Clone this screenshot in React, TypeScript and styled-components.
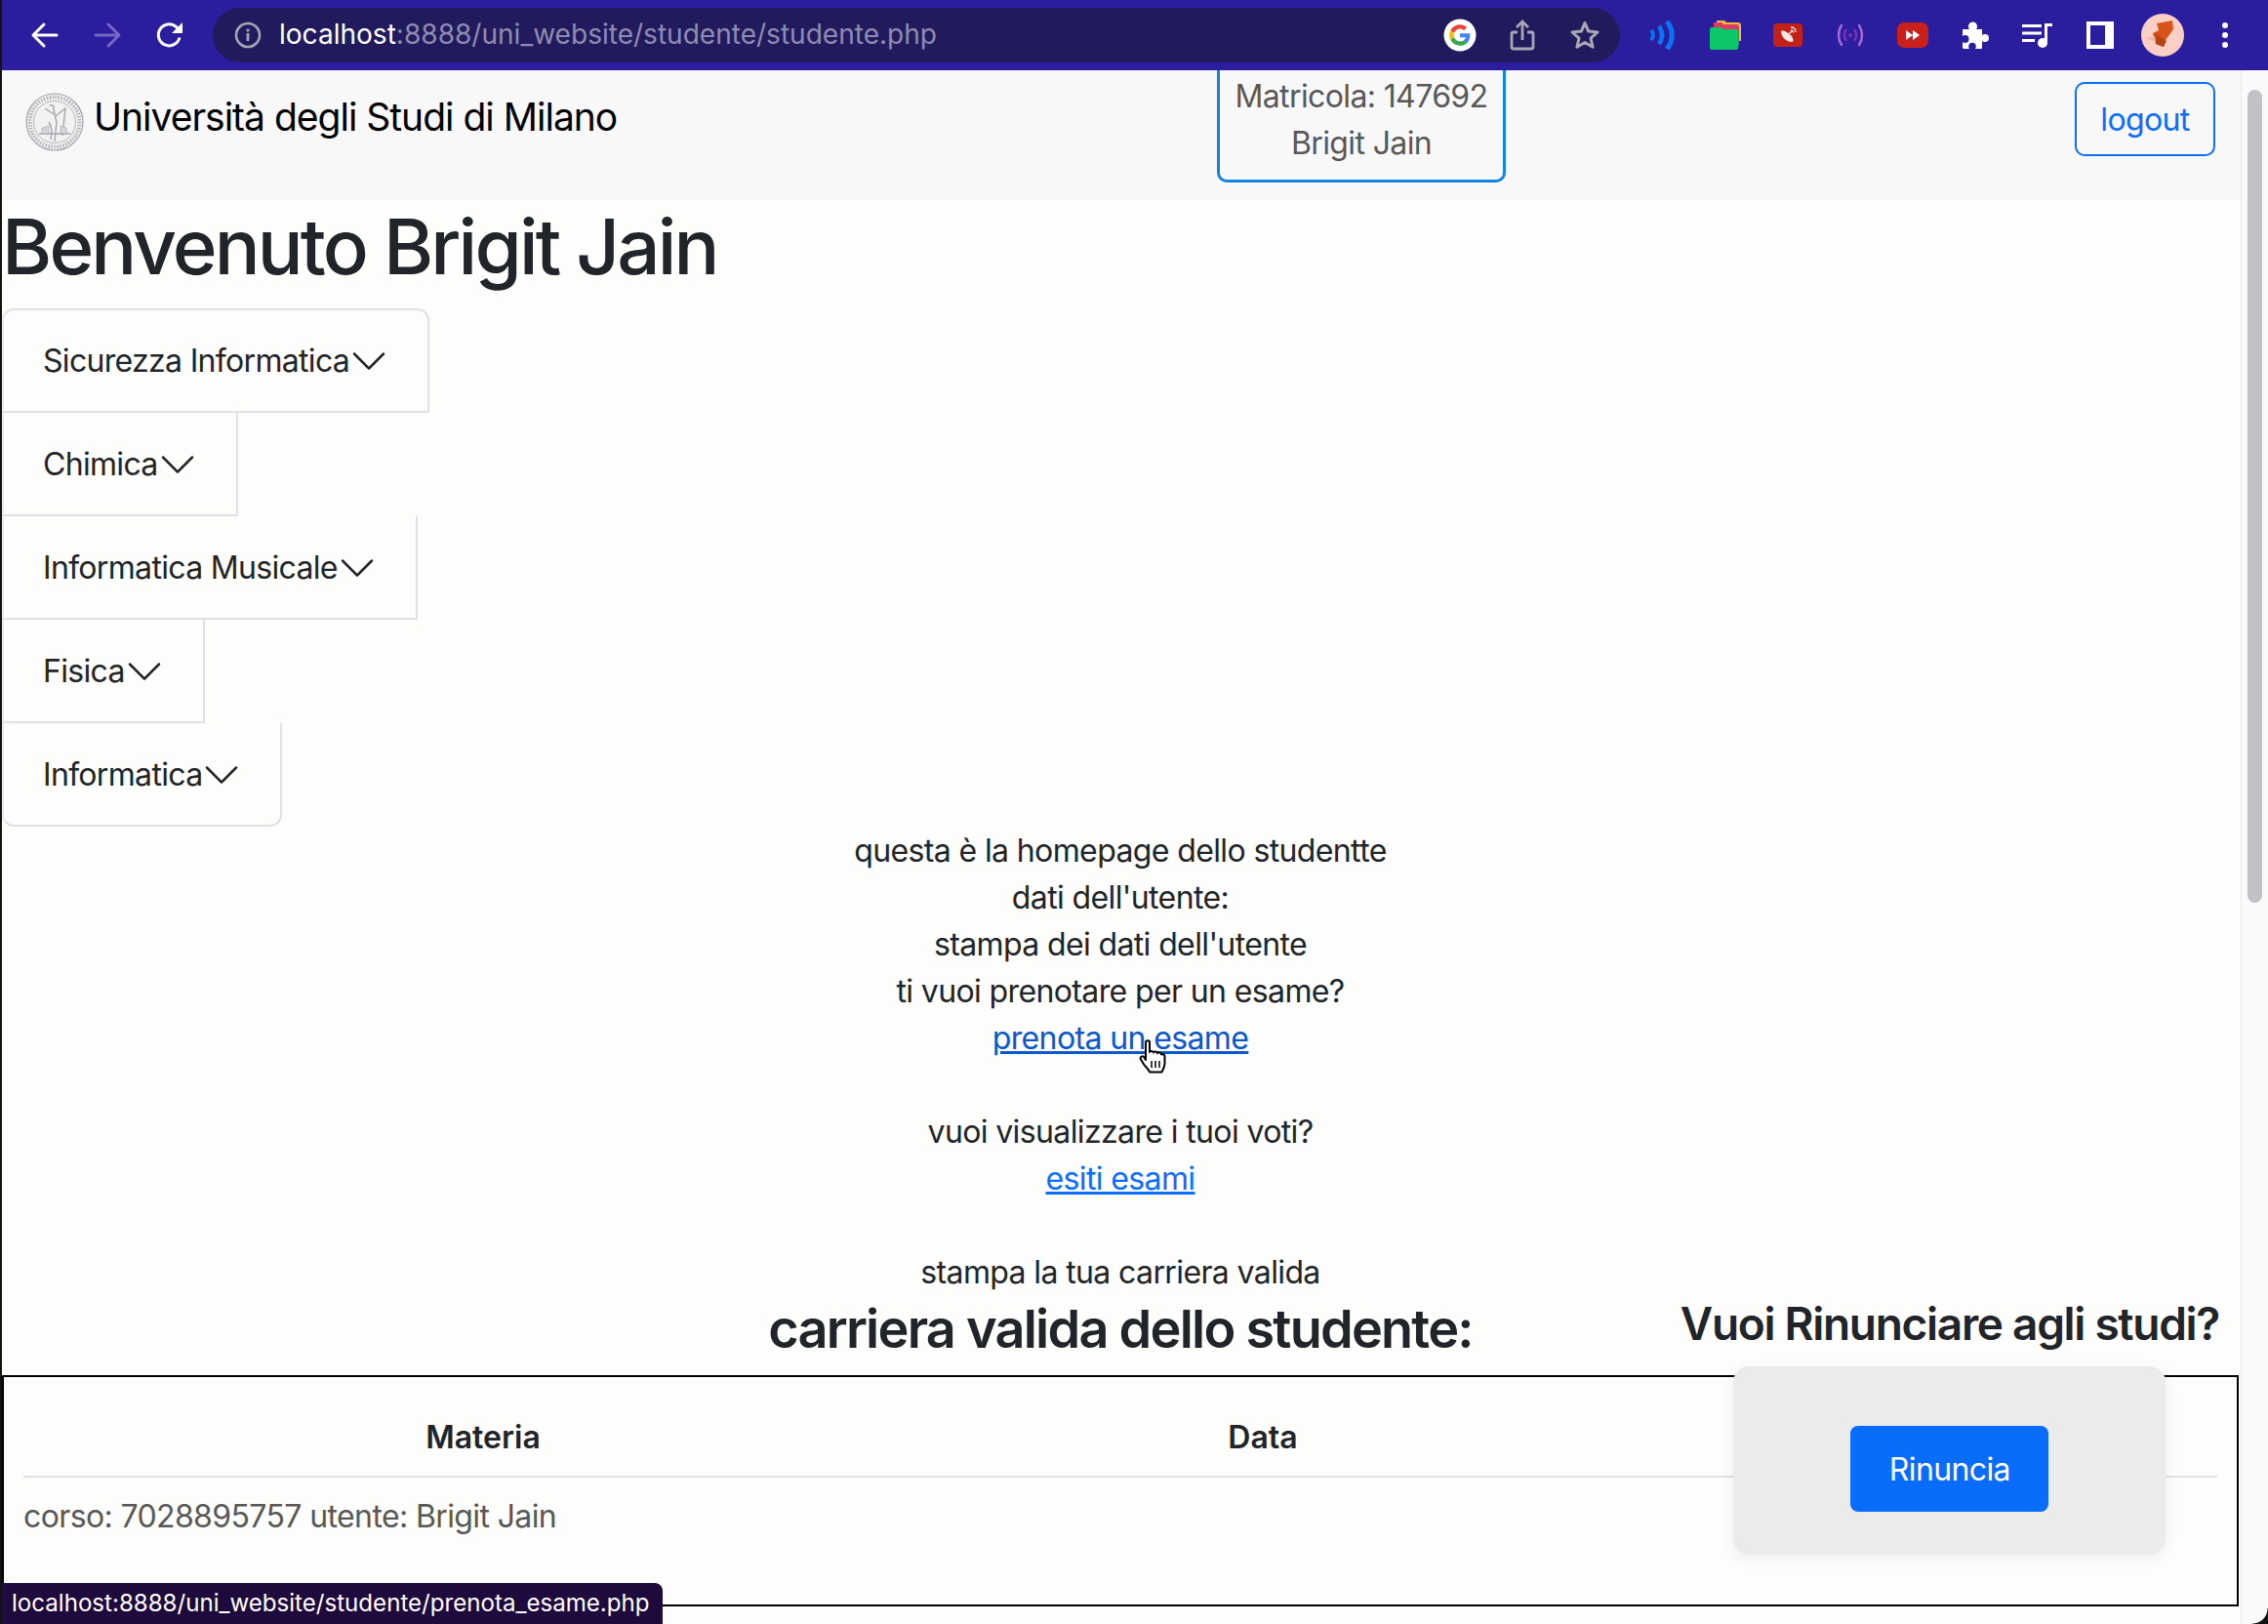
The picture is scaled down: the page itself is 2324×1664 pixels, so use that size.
import React from "react";
import styled, { createGlobalStyle } from "styled-components";

const GlobalStyle = createGlobalStyle`
  html, body {
    margin: 0;
    padding: 0;
    background: #fdfdfc;
  }
  * {
    box-sizing: border-box;
  }
`;

const Window = styled.div`
  position: relative;
  width: 2324px;
  height: 1664px;
  overflow: hidden;
  display: flex;
  flex-direction: column;
  border-left: 2px solid #14110f;
  background: #fdfdfc;
  color: #212529;
  font-family: Inter, "Liberation Sans", sans-serif;
  font-size: 32px;
  line-height: 48px;
  letter-spacing: -0.62px;
`;

const Toolbar = styled.header`
  flex: none;
  height: 72px;
  display: flex;
  align-items: center;
  padding-left: 12px;
  background: #2b1e9e;
`;

const ToolButton = styled.div`
  flex: none;
  width: 64px;
  height: 60px;
  display: flex;
  align-items: center;
  justify-content: center;
`;

const UrlPill = styled.div`
  flex: none;
  width: 1442px;
  height: 56px;
  margin: 0 12px 0 12px;
  padding: 0 4px 0 20px;
  display: flex;
  align-items: center;
  border-radius: 28px;
  background: #211b5e;
`;

const InfoSlot = styled.div`
  flex: none;
  width: 32px;
  margin-right: 16px;
  display: flex;
  align-items: center;
  justify-content: center;
`;

const Url = styled.div`
  flex: 1;
  padding-bottom: 2px;
  font-size: 28.05px;
  line-height: 36px;
  letter-spacing: 0;
  color: #8f8bb0;
  white-space: nowrap;
`;

const UrlHost = styled.span`
  color: #ffffff;
`;

const Body = styled.div`
  flex: 1;
  min-height: 0;
  display: flex;
`;

const Main = styled.main`
  position: relative;
  flex: 1;
  min-width: 0;
`;

const ScrollTrack = styled.div`
  flex: none;
  width: 28px;
  padding: 20px 6px 0 6px;
  background: #fafafa;
  border-left: 1px solid #e8e8e8;
`;

const ScrollThumb = styled.div`
  height: 833px;
  border-radius: 8px;
  background: #c2c2c6;
`;

const Navbar = styled.nav`
  height: 132px;
  display: grid;
  grid-template-columns: 1245px 296px 1fr;
  align-items: start;
  padding-right: 26px;
  background: #f8f8f8;
`;

const Brand = styled.a`
  display: flex;
  align-items: center;
  gap: 10px;
  height: 60px;
  margin: 23px 0 0 24px;
  font-size: 39px;
  letter-spacing: -1px;
  color: #000000;
`;

const BrandText = styled.span`
  position: relative;
  top: -5px;
`;

const StudentCard = styled.div`
  height: 115px;
  padding-top: 3px;
  text-align: center;
  color: #585858;
  border: 3px solid #1784dc;
  border-top: none;
  border-radius: 0 0 10px 10px;
`;

const LogoutButton = styled.button`
  justify-self: end;
  width: 144px;
  height: 76px;
  margin-top: 12px;
  padding: 2px 0 0;
  border: 2.5px solid #0d6efd;
  border-radius: 10px;
  background: transparent;
  color: #0d6efd;
  font: inherit;
  letter-spacing: inherit;
`;

const Title = styled.h1`
  margin: 0 0 16px;
  padding-top: 1px;
  height: 96px;
  font-size: 78px;
  line-height: 96px;
  font-weight: 500;
  letter-spacing: -2.85px;
`;

const Accordion = styled.div`
  display: flex;
  flex-direction: column;
  align-items: flex-start;
`;

const AccordionItem = styled.button<{ $first?: boolean; $last?: boolean }>`
  height: ${(p) => (p.$first ? "107px" : "106px")};
  margin: 0;
  padding: ${(p) => (p.$first ? "0 40px" : "2px 40px 0")};
  display: flex;
  align-items: center;
  border: 2px solid #dee2e6;
  border-left-color: #e9ebee;
  border-top: ${(p) => (p.$first ? "2px solid #dee2e6" : "none")};
  border-radius: ${(p) =>
    p.$first ? "12px 12px 0 0" : p.$last ? "0 0 12px 12px" : "0"};
  background: transparent;
  color: #212529;
  font: inherit;
  letter-spacing: -0.68px;
`;

const Intro = styled.section`
  margin-top: 1px;
  padding-right: 2px;
  text-align: center;
`;

const IntroLine = styled.div`
  min-height: 48px;
`;

const LinkWrap = styled.span`
  position: relative;
  display: inline-block;
`;

const TextLink = styled.a<{ $hover?: boolean }>`
  color: ${(p) => (p.$hover ? "#0a58ca" : "#0d6efd")};
  text-decoration: underline;
  text-decoration-thickness: 2.5px;
`;

const Pointer = styled.svg`
  position: absolute;
  left: 150px;
  top: 25px;
`;

const CareerTitle = styled.h3`
  margin: 0 0 14px;
  padding-right: 2px;
  font-size: 54px;
  line-height: 67px;
  font-weight: 600;
  text-align: center;
  letter-spacing: -1.75px;
`;

const TableBox = styled.div`
  width: 2292px;
  height: 237px;
  padding: 22px 20px;
  border: 2px solid #000000;
`;

const Table = styled.table`
  width: 100%;
  table-layout: fixed;
  border-collapse: collapse;
`;

const Th = styled.th<{ $width?: number }>`
  width: ${(p) => (p.$width ? `${p.$width}px` : "auto")};
  height: 80px;
  padding: 0;
  font-weight: 600;
  text-align: center;
  letter-spacing: 0;
  border-bottom: 2px solid #dee2e6;
`;

const Td = styled.td`
  height: 80px;
  padding: 0;
  color: #585858;
  white-space: nowrap;
`;

const QuitPanel = styled.aside`
  position: absolute;
  top: 1255px;
  right: 22px;
  display: flex;
  flex-direction: column;
  align-items: center;
`;

const QuitTitle = styled.h4`
  margin: 0 0 15px;
  font-size: 46px;
  line-height: 58px;
  font-weight: 600;
  white-space: nowrap;
  letter-spacing: -1.3px;
`;

const QuitCard = styled.div`
  width: 443px;
  height: 193px;
  padding-top: 16px;
  display: flex;
  align-items: center;
  justify-content: center;
  border-radius: 16px;
  background: #ebebeb;
  box-shadow: 0 4px 16px rgba(0, 0, 0, 0.06);
`;

const QuitButton = styled.button`
  width: 203px;
  height: 88px;
  padding: 2px 0 0;
  border: none;
  border-radius: 8px;
  background: #0a6cfb;
  color: #ffffff;
  font: inherit;
  letter-spacing: inherit;
`;

const StatusBubble = styled.div`
  position: absolute;
  left: 0;
  bottom: 0;
  height: 42px;
  padding: 0 13px 0 10px;
  display: flex;
  align-items: center;
  border-radius: 0 8px 0 0;
  background: #1e0a3c;
  color: #ffffff;
  font-size: 24.1px;
  line-height: 32px;
  letter-spacing: 0;
  white-space: nowrap;
`;

const WindowCorner = styled.div`
  position: absolute;
  right: 0;
  bottom: 0;
  width: 16px;
  height: 16px;
  background: radial-gradient(circle at 0 0, transparent 15px, #111111 16px);
`;

const Chevron = () => (
  <svg width="40" height="40" viewBox="0 0 16 16" fill="#212529">
    <path
      fillRule="evenodd"
      d="M1.646 4.646a.5.5 0 0 1 .708 0L8 10.293l5.646-5.647a.5.5 0 0 1 .708.708l-6 6a.5.5 0 0 1-.708 0l-6-6a.5.5 0 0 1 0-.708z"
    />
  </svg>
);

const ArrowIcon = ({ dir, color }: { dir: "left" | "right"; color: string }) => (
  <svg width="30" height="30" viewBox="0 0 30 30" fill="none" stroke={color} strokeWidth="3" strokeLinecap="round" strokeLinejoin="round">
    {dir === "left" ? (
      <path d="M27 15H4M14 4L3 15l11 11" />
    ) : (
      <path d="M3 15h23M16 4l11 11-11 11" />
    )}
  </svg>
);

const ReloadIcon = () => (
  <svg width="30" height="30" viewBox="0 0 30 30" fill="none">
    <path d="M25 17.5A11 11 0 1 1 21.5 6.5L25 10" stroke="#fff" strokeWidth="3" />
    <path d="M28 2v11H17z" fill="#fff" />
  </svg>
);

const InfoIcon = () => (
  <svg width="28" height="28" viewBox="0 0 28 28" fill="none">
    <circle cx="14" cy="14" r="12" stroke="#a6a4b4" strokeWidth="2.6" />
    <rect x="12.6" y="12" width="2.8" height="8" fill="#a6a4b4" />
    <rect x="12.6" y="7.6" width="2.8" height="2.8" fill="#a6a4b4" />
  </svg>
);

const GoogleIcon = () => (
  <svg width="34" height="34" viewBox="0 0 34 34">
    <circle cx="17" cy="17" r="16.5" fill="#fff" />
    <g transform="translate(6.2 6.2) scale(0.45)">
      <path fill="#EA4335" d="M24 9.5c3.5 0 6.7 1.2 9.2 3.600l6.900-6.900C35.900 2.400 30.500 0 24 0 14.600 0 6.500 5.400 2.600 13.200l8 6.200C12.500 13.700 17.800 9.500 24 9.500z" />
      <path fill="#4285F4" d="M47 24.500c0-1.600-.1-3.100-.4-4.500H24v9h12.900c-.6 3-2.200 5.500-4.800 7.200l7.700 6c4.500-4.200 7.200-10.300 7.200-17.700z" />
      <path fill="#FBBC05" d="M10.500 28.600c-.5-1.500-.8-3-.8-4.600s.3-3.100.8-4.600l-8-6.200C.9 16.500 0 20.100 0 24s.9 7.500 2.600 10.800l7.900-6.200z" />
      <path fill="#34A853" d="M24 48c6.500 0 11.900-2.100 15.900-5.800l-7.700-6c-2.200 1.500-4.900 2.300-8.200 2.300-6.200 0-11.500-4.200-13.400-9.900l-8 6.200C6.500 42.600 14.600 48 24 48z" />
    </g>
  </svg>
);

const ShareIcon = () => (
  <svg width="26" height="32" viewBox="0 0 26 32" fill="none" stroke="#a9a7b5" strokeWidth="2.8">
    <path d="M8 13H3.500a1.500 1.500 0 0 0-1.500 1.500v13.500a2 2 0 0 0 2 2h18a2 2 0 0 0 2-2V14.500A1.500 1.500 0 0 0 22.500 13H18" />
    <path d="M13 21V3M7 8l6-6 6 6" />
  </svg>
);

const StarIcon = () => (
  <svg width="32" height="32" viewBox="0 0 32 32" fill="none" stroke="#a9a7b5" strokeWidth="3" strokeLinejoin="round">
    <path d="M16 3.500l3.700 8.600 9.300.9-7 6.200 2.100 9.100-8.100-4.800-8.100 4.800 2.100-9.100-7-6.200 9.300-.9z" />
  </svg>
);

const WavesIcon = () => (
  <svg width="28" height="30" viewBox="0 0 28 30" fill="none" stroke="#0a74f5">
    <path d="M2 10c2.500 3 2.500 7 0 10" strokeWidth="4" />
    <path d="M10 6c4 5 4 13 0 18" strokeWidth="4.500" />
    <path d="M18 1c7 8 7 20 0 28" strokeWidth="5" />
  </svg>
);

const FoldersIcon = () => (
  <svg width="34" height="32" viewBox="0 0 34 32">
    <path fill="#f3b63f" d="M8 1h8l2 2h12a3 3 0 0 1 3 3v16H8z" />
    <path fill="#d83c63" d="M5 3h8l2 2h13a3 3 0 0 1 3 3v19H5z" />
    <path fill="#0bc76a" d="M3 8h9l3 2h13a2 2 0 0 1 2 2v17a2 2 0 0 1-2 2H3a2 2 0 0 1-2-2V10a2 2 0 0 1 2-2z" />
  </svg>
);

const DishIcon = () => (
  <svg width="30" height="24" viewBox="0 0 30 24">
    <rect width="30" height="24" rx="4" fill="#c2211a" />
    <path d="M8 8c0 6 5 11 12 11 1-2 0-4-1-6l-5-4c-2-1-4-2-6-1z" fill="#fbe7e2" />
    <path d="M14 13l5-5M18 4c3 0 5 2 5 5M18 7c1.500 0 2.500 1 2.500 2.500" stroke="#fbe7e2" strokeWidth="1.300" fill="none" />
  </svg>
);

const SignalIcon = () => (
  <svg width="28" height="26" viewBox="0 0 28 26" fill="none" strokeLinecap="round">
    <path d="M5 3c-4 6-4 14 0 20M23 3c4 6 4 14 0 20" stroke="#a866d6" strokeWidth="2.500" />
    <path d="M9.500 8c-2 3-2 7 0 10M18.500 8c2 3 2 7 0 10" stroke="#7b2fb8" strokeWidth="2.500" />
    <circle cx="14" cy="13" r="2" fill="#7b2fb8" />
  </svg>
);

const FastForwardIcon = () => (
  <svg width="32" height="26" viewBox="0 0 32 26">
    <rect width="32" height="26" rx="7" fill="#c9201c" />
    <path d="M9 8l7 5-7 5zM16 8l7 5-7 5z" fill="#fff" />
  </svg>
);

const PuzzleIcon = () => (
  <svg width="30" height="30" viewBox="0 0 30 30" fill="#fff">
    <path d="M2 9h7c-1-1-1-2-1-3a4.500 4.500 0 0 1 9 0c0 1 0 2-1 3h6v6c1-1 2-1 3-1a4 4 0 0 1 0 8c-1 0-2 0-3-1v7a1 1 0 0 1-1 1h-6c.6-1 .8-2 .8-2.500a3.800 3.800 0 0 0-7.600 0c0 .5.200 1.500.8 2.500H3l-1-1v-6c1 .8 2 1 2.500 1a4 4 0 0 0 0-8c-.5 0-1.500.200-2.500 1z" />
  </svg>
);

const MusicQueueIcon = () => (
  <svg width="32" height="26" viewBox="0 0 32 26" fill="#fff">
    <rect x="0" y="2" width="20" height="3" />
    <rect x="0" y="9.500" width="20" height="3" />
    <rect x="0" y="17" width="13" height="3" />
    <rect x="23" y="2" width="3" height="20" />
    <rect x="23" y="1" width="8" height="3" />
    <circle cx="21" cy="21" r="5" />
  </svg>
);

const SidePanelIcon = () => (
  <svg width="28" height="28" viewBox="0 0 28 28" fill="none">
    <path fillRule="evenodd" clipRule="evenodd" fill="#fff" d="M0 0h28v28H0zM4 4v20h15V4z" />
  </svg>
);

const AvatarIcon = () => (
  <svg width="44" height="44" viewBox="0 0 44 44">
    <circle cx="22" cy="22" r="22" fill="#f9cfc6" />
    <path d="M16 10l16-3 1 9-8 11-2 7-8-3-3-11 6-3z" fill="#d9541a" />
    <path d="M14 20l12 8-3 6-8-3z" fill="#b74414" />
    <path d="M5 25l9-2 1 6z" fill="#efb7a2" />
  </svg>
);

const DotsIcon = () => (
  <svg width="10" height="30" viewBox="0 0 10 30" fill="#fff">
    <circle cx="5" cy="5" r="3" />
    <circle cx="5" cy="15" r="3" />
    <circle cx="5" cy="25" r="3" />
  </svg>
);

const SealLogo = () => (
  <svg width="60" height="60" viewBox="0 0 60 60" fill="none" stroke="#a3a5ab">
    <circle cx="30" cy="30" r="29" strokeWidth="1.200" fill="#f2f2f2" />
    <circle cx="30" cy="30" r="25.500" strokeWidth="4" strokeDasharray="1.500 1.500" stroke="#b3b4b9" />
    <circle cx="30" cy="30" r="21.500" strokeWidth="0.800" />
    <path d="M25 13c3-1 5 1 4 4l1 5 2 8-2 20M29 22l-9-6M31 24l10-8-3 28M24 30c4 6 3 10 2 18M14 42h32" strokeWidth="1.400" />
    <path d="M17 36l7-2v8h-7zM36 34l6 2v6h-6z" fill="#d4d5d8" strokeWidth="0.600" />
  </svg>
);

const HandCursor = () => (
  <Pointer width="30" height="36" viewBox="0 0 30 36">
    <path
      d="M7 3c0-2.500 4-2.500 4 0v10c1-1.500 4-1 4 .5.500-1.500 4-1.300 4 .7 1-1.200 4-.7 4 1.300.8-.8 3.500-.5 3.500 2v7c0 4-2 6-3 9H11c-1-3-3-4-6-8l-3-5c-1.500-2.500 2-4.500 3.500-2L7 21z"
      fill="#fff"
      stroke="#000"
      strokeWidth="2"
      strokeLinejoin="round"
    />
    <path d="M13 22v7M17 22v7M21 22v7" stroke="#000" strokeWidth="1.500" />
  </Pointer>
);

const courses = ["Sicurezza Informatica", "Chimica", "Informatica Musicale", "Fisica", "Informatica"];

const App = () => {
  return (
    <>
      <GlobalStyle />
      <Window>
        <Toolbar>
          <ToolButton><ArrowIcon dir="left" color="#ffffff" /></ToolButton>
          <ToolButton><ArrowIcon dir="right" color="#7468c4" /></ToolButton>
          <ToolButton><ReloadIcon /></ToolButton>
          <UrlPill>
            <InfoSlot><InfoIcon /></InfoSlot>
            <Url><UrlHost>localhost</UrlHost>:8888/uni_website/studente/studente.php</Url>
            <ToolButton><GoogleIcon /></ToolButton>
            <ToolButton><ShareIcon /></ToolButton>
            <ToolButton><StarIcon /></ToolButton>
          </UrlPill>
          <ToolButton><WavesIcon /></ToolButton>
          <ToolButton><FoldersIcon /></ToolButton>
          <ToolButton><DishIcon /></ToolButton>
          <ToolButton><SignalIcon /></ToolButton>
          <ToolButton><FastForwardIcon /></ToolButton>
          <ToolButton><PuzzleIcon /></ToolButton>
          <ToolButton><MusicQueueIcon /></ToolButton>
          <ToolButton><SidePanelIcon /></ToolButton>
          <ToolButton><AvatarIcon /></ToolButton>
          <ToolButton><DotsIcon /></ToolButton>
        </Toolbar>
        <Body>
          <Main>
            <Navbar>
              <Brand><SealLogo /><BrandText>Università degli Studi di Milano</BrandText></Brand>
              <StudentCard>
                Matricola: 147692
                <br />
                Brigit Jain
              </StudentCard>
              <LogoutButton>logout</LogoutButton>
            </Navbar>
            <Title>Benvenuto Brigit Jain</Title>
            <Accordion>
              {courses.map((course, i) => (
                <AccordionItem key={course} $first={i === 0} $last={i === courses.length - 1}>
                  {course}
                  <Chevron />
                </AccordionItem>
              ))}
            </Accordion>
            <Intro>
              <IntroLine>questa è la homepage dello studentte</IntroLine>
              <IntroLine>dati dell'utente:</IntroLine>
              <IntroLine>stampa dei dati dell'utente</IntroLine>
              <IntroLine>ti vuoi prenotare per un esame?</IntroLine>
              <IntroLine>
                <LinkWrap>
                  <TextLink $hover href="#">prenota un esame</TextLink>
                  <HandCursor />
                </LinkWrap>
              </IntroLine>
              <IntroLine />
              <IntroLine>vuoi visualizzare i tuoi voti?</IntroLine>
              <IntroLine><TextLink href="#">esiti esami</TextLink></IntroLine>
              <IntroLine />
              <IntroLine>stampa la tua carriera valida</IntroLine>
            </Intro>
            <CareerTitle>carriera valida dello studente:</CareerTitle>
            <TableBox>
              <Table>
                <thead>
                  <tr>
                    <Th $width={942}>Materia</Th>
                    <Th $width={656}>Data</Th>
                    <Th />
                  </tr>
                </thead>
                <tbody>
                  <tr>
                    <Td>corso: 7028895757 utente: Brigit Jain</Td>
                    <Td />
                    <Td />
                  </tr>
                </tbody>
              </Table>
            </TableBox>
            <QuitPanel>
              <QuitTitle>Vuoi Rinunciare agli studi?</QuitTitle>
              <QuitCard>
                <QuitButton>Rinuncia</QuitButton>
              </QuitCard>
            </QuitPanel>
          </Main>
          <ScrollTrack>
            <ScrollThumb />
          </ScrollTrack>
        </Body>
        <StatusBubble>localhost:8888/uni_website/studente/prenota_esame.php</StatusBubble>
        <WindowCorner />
      </Window>
    </>
  );
};

export default App;
